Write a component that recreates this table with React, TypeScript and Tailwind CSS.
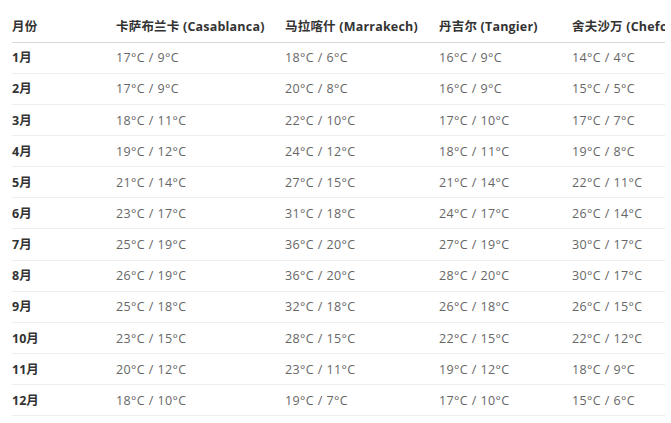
import React from "react";

const rows: [string, string, string, string, string][] = [
  ["1月", "17°C / 9°C", "18°C / 6°C", "16°C / 9°C", "14°C / 4°C"],
  ["2月", "17°C / 9°C", "20°C / 8°C", "16°C / 9°C", "15°C / 5°C"],
  ["3月", "18°C / 11°C", "22°C / 10°C", "17°C / 10°C", "17°C / 7°C"],
  ["4月", "19°C / 12°C", "24°C / 12°C", "18°C / 11°C", "19°C / 8°C"],
  ["5月", "21°C / 14°C", "27°C / 15°C", "21°C / 14°C", "22°C / 11°C"],
  ["6月", "23°C / 17°C", "31°C / 18°C", "24°C / 17°C", "26°C / 14°C"],
  ["7月", "25°C / 19°C", "36°C / 20°C", "27°C / 19°C", "30°C / 17°C"],
  ["8月", "26°C / 19°C", "36°C / 20°C", "28°C / 20°C", "30°C / 17°C"],
  ["9月", "25°C / 18°C", "32°C / 18°C", "26°C / 18°C", "26°C / 15°C"],
  ["10月", "23°C / 15°C", "28°C / 15°C", "22°C / 15°C", "22°C / 12°C"],
  ["11月", "20°C / 12°C", "23°C / 11°C", "19°C / 12°C", "18°C / 9°C"],
  ["12月", "18°C / 10°C", "19°C / 7°C", "17°C / 10°C", "15°C / 6°C"],
];

const headers = [
  "月份",
  "卡萨布兰卡 (Casablanca)",
  "马拉喀什 (Marrakech)",
  "丹吉尔 (Tangier)",
  "舍夫沙万 (Chefchaouen)",
];

export default function App() {
  return (
    <div
      className="w-[671px] h-[423px] bg-white pt-[10px] pl-[12px]"
      style={{ fontFamily: '"Open Sans", "Noto Sans CJK SC", sans-serif' }}
    >
      <div className="w-[653px] overflow-hidden">
        <table className="border-collapse table-fixed w-[760px] text-[12.5px]">
          <colgroup>
            <col className="w-[104px]" />
            <col className="w-[169px]" />
            <col className="w-[154px]" />
            <col className="w-[133px]" />
            <col className="w-[200px]" />
          </colgroup>
          <thead>
            <tr className="h-[32px] border-b border-[#d9d9d9]">
              {headers.map((h) => (
                <th
                  key={h}
                  className="text-left font-bold text-[#333] tracking-[0.2px] whitespace-nowrap p-0 pt-[3px] align-middle"
                >
                  {h}
                </th>
              ))}
            </tr>
          </thead>
          <tbody>
            {rows.map((r) => (
              <tr key={r[0]} className="h-[31.17px] border-b border-[#eeeeee]">
                {r.map((c, i) => (
                  <td
                    key={i}
                    className={
                      i === 0
                        ? "p-0 pt-[2px] font-bold text-[#333] whitespace-nowrap align-middle"
                        : "p-0 pt-[2px] text-[#666] tracking-[0.4px] whitespace-nowrap align-middle"
                    }
                  >
                    {c}
                  </td>
                ))}
              </tr>
            ))}
          </tbody>
        </table>
      </div>
    </div>
  );
}
